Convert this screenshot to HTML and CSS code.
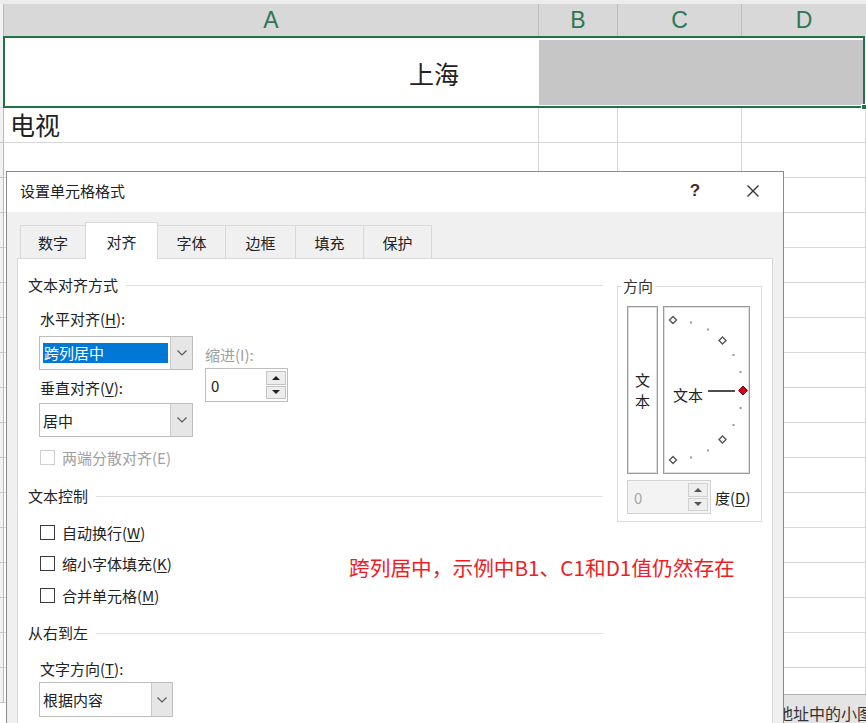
FILE: index.html
```html
<!DOCTYPE html>
<html lang="zh-CN">
<head>
<meta charset="utf-8">
<title>设置单元格格式</title>
<link rel="stylesheet" href="styles.css">
</head>
<body>
<div class="sheet">
  <div class="topstrip"></div>
  <div class="colhead">
    <div class="rh"></div>
    <div class="ch ca">A</div><div class="ch cb">B</div><div class="ch cc">C</div><div class="ch cd">D</div>
  </div>
  <div class="r1">
    <div class="rh"></div>
    <div class="sel">
      <div class="fillgray"></div>
      <div class="seltext">上海</div>
      <div class="handle"></div>
    </div>
  </div>
  <div class="row"><div class="rh"></div><div class="cell ca big">电视</div><div class="cell cb"></div><div class="cell cc"></div><div class="cell cd"></div></div>
  <div class="row"><div class="rh"></div><div class="cell ca"></div><div class="cell cb"></div><div class="cell cc"></div><div class="cell cd"></div></div>
  <div class="row"><div class="rh"></div><div class="cell ca"></div><div class="cell cb"></div><div class="cell cc"></div><div class="cell cd"></div></div>
  <div class="row"><div class="rh"></div><div class="cell ca"></div><div class="cell cb"></div><div class="cell cc"></div><div class="cell cd"></div></div>
  <div class="row"><div class="rh"></div><div class="cell ca"></div><div class="cell cb"></div><div class="cell cc"></div><div class="cell cd"></div></div>
  <div class="row"><div class="rh"></div><div class="cell ca"></div><div class="cell cb"></div><div class="cell cc"></div><div class="cell cd"></div></div>
  <div class="row"><div class="rh"></div><div class="cell ca"></div><div class="cell cb"></div><div class="cell cc"></div><div class="cell cd"></div></div>
  <div class="row"><div class="rh"></div><div class="cell ca"></div><div class="cell cb"></div><div class="cell cc"></div><div class="cell cd"></div></div>
  <div class="row"><div class="rh"></div><div class="cell ca"></div><div class="cell cb"></div><div class="cell cc"></div><div class="cell cd"></div></div>
  <div class="row"><div class="rh"></div><div class="cell ca"></div><div class="cell cb"></div><div class="cell cc"></div><div class="cell cd"></div></div>
  <div class="row"><div class="rh"></div><div class="cell ca"></div><div class="cell cb"></div><div class="cell cc"></div><div class="cell cd"></div></div>
  <div class="row"><div class="rh"></div><div class="cell ca"></div><div class="cell cb"></div><div class="cell cc"></div><div class="cell cd"></div></div>
  <div class="row"><div class="rh"></div><div class="cell ca"></div><div class="cell cb"></div><div class="cell cc"></div><div class="cell cd"></div></div>
  <div class="row"><div class="rh"></div><div class="cell ca"></div><div class="cell cb"></div><div class="cell cc"></div><div class="cell cd"></div></div>
  <div class="row"><div class="rh"></div><div class="cell ca"></div><div class="cell cb"></div><div class="cell cc"></div><div class="cell cd"></div></div>
  <div class="row"><div class="rh"></div><div class="cell ca"></div><div class="cell cb"></div><div class="cell cc"></div><div class="cell cd"></div></div>
  <div class="row"><div class="rh"></div><div class="cell ca"></div><div class="cell cb"></div><div class="cell cc"></div><div class="cell cd"></div></div>
</div>

<div class="tipbar">地址中的小图标</div>

<div class="dialog">
  <div class="titlebar">
    <span class="title">设置单元格格式</span>
    <span class="help">?</span>
    <span class="close"><svg width="14" height="14" viewBox="0 0 14 14"><path d="M1.5 1.5 L12.5 12.5 M12.5 1.5 L1.5 12.5" stroke="#333" stroke-width="1.4" fill="none"/></svg></span>
  </div>
  <div class="dbody">
    <div class="tabs">
      <div class="tab t1">数字</div>
      <div class="tab t2 active">对齐</div>
      <div class="tab t3">字体</div>
      <div class="tab t4">边框</div>
      <div class="tab t5">填充</div>
      <div class="tab t6">保护</div>
    </div>
    <div class="panel">
      <div class="leftcol">
        <div class="heading"><span>文本对齐方式</span><i class="hline"></i></div>
        <div class="alignblock">
          <div class="colA">
            <div class="label lbl-h">水平对齐(<u>H</u>):</div>
            <div class="select sel-h">
              <div class="val"><span class="hl">跨列居中</span></div>
              <div class="btn"><svg width="10" height="6" viewBox="0 0 10 6"><path d="M0.5 0.5 L5 5 L9.5 0.5" stroke="#555" stroke-width="1.1" fill="none"/></svg></div>
            </div>
            <div class="label lbl-v">垂直对齐(<u>V</u>):</div>
            <div class="select sel-v">
              <div class="val">居中</div>
              <div class="btn"><svg width="10" height="6" viewBox="0 0 10 6"><path d="M0.5 0.5 L5 5 L9.5 0.5" stroke="#555" stroke-width="1.1" fill="none"/></svg></div>
            </div>
          </div>
          <div class="colB">
            <div class="label lbl-i disabled">缩进(I):</div>
            <div class="spin">
              <span class="num">0</span>
              <div class="spinbtns"><div class="sb"><i class="up"></i></div><div class="sb"><i class="down"></i></div></div>
            </div>
          </div>
        </div>
        <div class="check chk-dis disabled"><i class="box"></i><span>两端分散对齐(E)</span></div>

        <div class="heading h2"><span>文本控制</span><i class="hline"></i></div>
        <div class="check chk1"><i class="box"></i><span>自动换行(<u>W</u>)</span></div>
        <div class="check chk2"><i class="box"></i><span>缩小字体填充(<u>K</u>)</span></div>
        <div class="check chk3"><i class="box"></i><span>合并单元格(<u>M</u>)</span></div>

        <div class="heading h3"><span>从右到左</span><i class="hline"></i></div>
        <div class="label lbl-t">文字方向(<u>T</u>):</div>
        <div class="select sel-t">
          <div class="val">根据内容</div>
          <div class="btn"><svg width="10" height="6" viewBox="0 0 10 6"><path d="M0.5 0.5 L5 5 L9.5 0.5" stroke="#555" stroke-width="1.1" fill="none"/></svg></div>
        </div>
      </div>

      <fieldset class="orient">
        <legend>方向</legend>
        <div class="orow">
          <div class="vbox"><span>文</span><span>本</span></div>
          <div class="dial">
            <svg class="dialsvg" width="87" height="168" viewBox="0 0 87 168">
              <g fill="#9a9a9a">
                <rect x="27" y="15.5" width="2" height="2"/>
                <rect x="44" y="22.5" width="2" height="2"/>
                <rect x="69.5" y="48" width="2" height="2"/>
                <rect x="76.5" y="65" width="2" height="2"/>
                <rect x="76.5" y="101" width="2" height="2"/>
                <rect x="69.5" y="118" width="2" height="2"/>
                <rect x="44" y="143.5" width="2" height="2"/>
                <rect x="27" y="150.5" width="2" height="2"/>
              </g>
              <g fill="#fff" stroke="#555" stroke-width="1.4">
                <polygon points="10,10.5 13.5,14 10,17.5 6.5,14"/>
                <polygon points="59.5,31 63,34.5 59.5,38 56,34.5"/>
                <polygon points="59.5,130 63,133.5 59.5,137 56,133.5"/>
                <polygon points="10,150.5 13.5,154 10,157.5 6.5,154"/>
              </g>
              <path d="M45 85 L72 85" stroke="#222" stroke-width="1.6"/>
              <polygon points="80,80 84.5,84.5 80,89 75.5,84.5" fill="#d0021b" stroke="#7a0010" stroke-width="1"/>
            </svg>
            <span class="dialtext">文本</span>
          </div>
        </div>
        <div class="degrow">
          <div class="spin spin-dis">
            <span class="num">0</span>
            <div class="spinbtns"><div class="sb"><i class="up"></i></div><div class="sb"><i class="down"></i></div></div>
          </div>
          <span class="deg">度(<u>D</u>)</span>
        </div>
      </fieldset>
    </div>
  </div>
</div>

<div class="note">跨列居中，示例中B1、C1和D1值仍然存在</div>
</body>
</html>
```

FILE: styles.css
```css
* { box-sizing: border-box; }
html, body { margin: 0; padding: 0; }
body {
  width: 866px;
  height: 723px;
  overflow: hidden;
  position: relative;
  background: #fff;
  font-family: "Noto Sans CJK SC", "Noto Sans", sans-serif;
  color: #222;
}

/* ---------- sheet ---------- */
.sheet { width: 866px; }
.topstrip { height: 4px; background: #ececec; }
.colhead { display: flex; height: 32px; background: #d8d8d8; }
.rh { width: 4px; flex: none; background: #f2f2f2; border-right: 1px solid #b9b9b9; }
.ca { width: 535px; }
.cb { width: 79px; }
.cc { width: 124px; }
.cd { width: 124px; }
.ch {
  flex: none;
  display: flex;
  align-items: center;
  justify-content: center;
  font-family: "Liberation Sans", Arial, sans-serif;
  font-size: 23px;
  color: #2e7752;
  border-right: 1px solid #bdbdbd;
  padding-top: 1px;
}
.ch.cd { border-right: none; }

.r1 { display: flex; height: 72px; }
.r1 .rh { border-bottom: 1px solid #d4d4d4; }
.sel {
  position: relative;
  flex: 1;
  margin-left: -1px;
  margin-right: 1px;
  border: 2px solid #217346;
  display: grid;
  grid-template-columns: 534px 1fr;
  grid-template-rows: 1fr;
}
.fillgray { grid-column: 2; grid-row: 1; background: #c6c6c6; margin: 2px 0 1px 0; }
.seltext {
  grid-column: 1 / 3;
  grid-row: 1;
  display: flex;
  align-items: center;
  justify-content: center;
  font-size: 25px;
  color: #222;
  padding-top: 2px;
}
.handle {
  position: absolute;
  right: -4px;
  bottom: -4px;
  width: 6px;
  height: 6px;
  background: #217346;
  border: 1px solid #fff;
}

.row { display: flex; height: 35px; }
.row .rh { border-bottom: 1px solid #c8c8c8; }
.cell { flex: none; height: 35px; border-right: 1px solid #d6d6d6; border-bottom: 1px solid #d6d6d6; }
.cell.cd { border-right: 1px solid #d6d6d6; }
.cell.big { font-size: 25px; line-height: 33px; padding-left: 6px; color: #222; }

/* ---------- tooltip behind dialog ---------- */
.tipbar {
  position: absolute;
  left: 774px;
  top: 694px;
  width: 92px;
  height: 40px;
  background: #e4e4e4;
  border-top: 1px solid #b0b0b0;
  font-size: 16px;
  line-height: 20px;
  padding-top: 8px;
  padding-left: 3px;
  white-space: nowrap;
  overflow: hidden;
  color: #333;
}

/* ---------- dialog ---------- */
.dialog {
  position: absolute;
  left: 6px;
  top: 171px;
  width: 778px;
  height: 570px;
  border: 1px solid #8a8a8a;
  background: #f0f0f0;
  display: flex;
  flex-direction: column;
  font-size: 15px;
}
.titlebar {
  height: 40px;
  flex: none;
  background: #fff;
  display: flex;
  align-items: center;
  padding-left: 13px;
  padding-right: 20px;
  padding-bottom: 3px;
}
.title { font-size: 15px; color: #222; }
.help {
  margin-left: auto;
  width: 20px;
  text-align: center;
  font-family: "Liberation Sans", Arial, sans-serif;
  font-size: 17px;
  font-weight: bold;
  color: #333;
}
.close { width: 20px; margin-left: 38px; display: flex; justify-content: center; align-items: center; }

.dbody { flex: 1; display: flex; flex-direction: column; padding: 10px 10px 0 10px; }
.tabs { display: flex; align-items: flex-end; height: 36px; padding-left: 3px; position: relative; z-index: 1; }
.tab {
  height: 33px;
  border: 1px solid #d9d9d9;
  border-bottom: none;
  margin-right: -1px;
  background: #f0f0f0;
  display: flex;
  align-items: center;
  justify-content: center;
  font-size: 15px;
  color: #222;
}
.tab.active { height: 37px; margin-bottom: -1px; background: #fff; position: relative; }
.t1 { width: 66px; }
.t2 { width: 73px; }
.t3 { width: 69px; }
.t4 { width: 71px; }
.t5 { width: 69px; }
.t6 { width: 69px; }

.panel {
  flex: 1;
  background: #fff;
  border: 1px solid #d9d9d9;
  display: flex;
  align-items: flex-start;
  padding: 16px 0 0 10px;
}
.leftcol { width: 575px; flex: none; display: flex; flex-direction: column; }

.heading { display: flex; align-items: center; height: 20px; line-height: 20px; font-size: 15px; }
.hline { flex: 1; height: 1px; background: #e0e0e0; margin-left: 8px; margin-top: 1px; }
.h2 { margin-top: 19px; }
.h3 { margin-top: 18px; }

.label { height: 20px; line-height: 20px; font-size: 15px; padding-left: 1px; }
.disabled { color: #a0a0a0; }
u { text-decoration: underline; text-underline-offset: 2px; }

.alignblock { display: flex; padding-left: 11px; }
.colA { width: 154px; flex: none; display: flex; flex-direction: column; }
.colB { margin-left: 12px; width: 83px; display: flex; flex-direction: column; }
.lbl-h { margin-top: 14px; }
.sel-h { margin-top: 7px; }
.lbl-v { margin-top: 8px; }
.sel-v { margin-top: 5px; }
.lbl-i { margin-top: 50px; padding-left: 0; }
.colB .spin { margin-top: 3px; }

.select {
  display: flex;
  height: 34px;
  border: 1px solid #bdbdbd;
  background: #fff;
}
.select .val { flex: 1; display: flex; align-items: center; padding: 0 2px 0 3px; font-size: 15px; }
.select .hl {
  display: block;
  width: 100%;
  height: 20px;
  line-height: 20px;
  background: #0078d7;
  color: #fff;
  padding-left: 1px;
}
.select .btn {
  width: 22px;
  flex: none;
  background: #e6e6e6;
  border-left: 1px solid #c9c9c9;
  display: flex;
  align-items: center;
  justify-content: center;
}
.sel-t { margin-top: 3px; width: 134px; height: 35px; margin-left: 11px; }
.sel-t .btn { width: 21px; }
.lbl-t { margin-top: 16px; margin-left: 11px; }

.spin {
  width: 83px;
  height: 34px;
  border: 1px solid #bdbdbd;
  background: #fff;
  display: flex;
  align-items: center;
  padding-left: 5px;
  padding-right: 1px;
}
.spin .num { flex: 1; font-size: 15px; color: #222; }
.spinbtns { width: 20px; height: 28px; display: flex; flex-direction: column; gap: 1px; }
.sb {
  flex: 1;
  background: #ededed;
  border: 1px solid #c4c4c4;
  display: flex;
  align-items: center;
  justify-content: center;
}
.up { width: 0; height: 0; border-left: 4px solid transparent; border-right: 4px solid transparent; border-bottom: 4px solid #222; }
.down { width: 0; height: 0; border-left: 4px solid transparent; border-right: 4px solid transparent; border-top: 4px solid #222; }

.check { display: flex; align-items: center; height: 20px; padding-left: 12px; font-size: 15px; }
.check .box { width: 15px; height: 15px; border: 1px solid #3a3a3a; background: #fff; margin-right: 7px; flex: none; }
.chk-dis { margin-top: 10px; }
.chk-dis .box { border-color: #cfcfcf; }
.chk1 { margin-top: 16px; }
.chk2 { margin-top: 11px; }
.chk3 { margin-top: 12px; }

/* orientation group */
.orient {
  margin: 0 0 0 14px;
  padding: 0 0 7px 9px;
  width: 145px;
  border: 1px solid #dcdcdc;
  min-width: 0;
  position: relative;
  top: 1px;
}
.orient legend {
  padding: 0 2px;
  margin-left: -6px;
  font-size: 15px;
  line-height: 20px;
  color: #333;
}
.orow { display: flex; margin-top: 10px; height: 168px; }
.vbox {
  width: 31px;
  height: 168px;
  border: 1px solid #9a9a9a;
  box-shadow: inset 0 0 0 1px #dedede;
  display: flex;
  flex-direction: column;
  align-items: center;
  justify-content: center;
  font-size: 15px;
  line-height: 21px;
}
.dial {
  position: relative;
  width: 87px;
  height: 168px;
  margin-left: 5px;
  border: 1px solid #9a9a9a;
  box-shadow: inset 0 0 0 1px #dedede;
}
.dialsvg { position: absolute; left: -1px; top: -1px; }
.dialtext { position: absolute; left: 9px; top: 78px; font-size: 15px; line-height: 20px; color: #222; }

.degrow { display: flex; align-items: center; margin-top: 6px; }
.spin-dis { width: 84px; background: #f3f3f3; border-color: #d2d2d2; padding-left: 6px; padding-right: 2px; }
.spin-dis .num { color: #a8a8a8; }
.spin-dis .sb { background: #eeeeee; border-color: #d0d0d0; }
.spin-dis .up { border-bottom-color: #555; }
.spin-dis .down { border-top-color: #555; }
.deg { margin-left: 4px; font-size: 15px; }

/* annotation */
.note {
  position: absolute;
  left: 349px;
  top: 555px;
  font-size: 20.7px;
  line-height: 24px;
  color: #ee1d25;
  white-space: nowrap;
}
```
